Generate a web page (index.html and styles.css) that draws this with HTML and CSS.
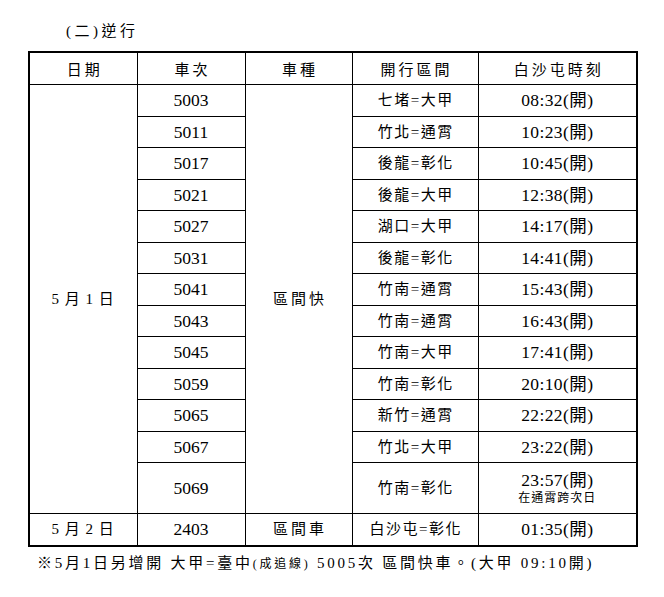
FILE: index.html
```html
<!DOCTYPE html>
<html lang="zh-Hant">
<head>
<meta charset="utf-8">
<link rel="stylesheet" href="styles.css">
</head>
<body>
<div class="page">
  <p class="title">(二)逆行</p>
  <table class="sched">
    <colgroup>
      <col class="c1"><col class="c2"><col class="c3"><col class="c4"><col class="c5">
    </colgroup>
    <thead>
      <tr><th>日期</th><th>車次</th><th>車種</th><th>開行區間</th><th>白沙屯時刻</th></tr>
    </thead>
    <tbody>
      <tr><td rowspan="13" class="date">5 月 1 日</td><td class="num">5003</td><td rowspan="13" class="kind">區間快</td><td class="sec">七堵=大甲</td><td class="time">08:32(開)</td></tr>
      <tr><td class="num">5011</td><td class="sec">竹北=通霄</td><td class="time">10:23(開)</td></tr>
      <tr><td class="num">5017</td><td class="sec">後龍=彰化</td><td class="time">10:45(開)</td></tr>
      <tr><td class="num">5021</td><td class="sec">後龍=大甲</td><td class="time">12:38(開)</td></tr>
      <tr><td class="num">5027</td><td class="sec">湖口=大甲</td><td class="time">14:17(開)</td></tr>
      <tr><td class="num">5031</td><td class="sec">後龍=彰化</td><td class="time">14:41(開)</td></tr>
      <tr><td class="num">5041</td><td class="sec">竹南=通霄</td><td class="time">15:43(開)</td></tr>
      <tr><td class="num">5043</td><td class="sec">竹南=通霄</td><td class="time">16:43(開)</td></tr>
      <tr><td class="num">5045</td><td class="sec">竹南=大甲</td><td class="time">17:41(開)</td></tr>
      <tr><td class="num">5059</td><td class="sec">竹南=彰化</td><td class="time">20:10(開)</td></tr>
      <tr><td class="num">5065</td><td class="sec">新竹=通霄</td><td class="time">22:22(開)</td></tr>
      <tr><td class="num">5067</td><td class="sec">竹北=大甲</td><td class="time">23:22(開)</td></tr>
      <tr class="tall"><td class="num">5069</td><td class="sec">竹南=彰化</td><td class="time">23:57(開)<span class="sub">在通霄跨次日</span></td></tr>
      <tr><td class="date">5 月 2 日</td><td class="num">2403</td><td class="kind">區間車</td><td class="sec">白沙屯=彰化</td><td class="time">01:35(開)</td></tr>
    </tbody>
  </table>
  <p class="note">※5月1日另增開 大甲=臺中<span class="small">(成追線)</span> 5005次 區間快車。(大甲 09:10開)</p>
</div>
</body>
</html>
```
FILE: styles.css
```css
html, body {
  margin: 0;
  padding: 0;
  background: #ffffff;
}
body {
  font-family: "Liberation Serif", "Noto Sans CJK TC", serif;
  color: #000000;
}
.page {
  padding: 21px 0 0 28px;
  width: 608px;
}
.title {
  margin: 0 0 10px 38px;
  font-size: 15px;
  line-height: 20px;
  letter-spacing: 3.5px;
}
.sched {
  border-collapse: collapse;
  border: 2px solid #000;
  width: 608px;
  table-layout: fixed;
}
.c1 { width: 108px; }
.c2 { width: 108px; }
.c3 { width: 107px; }
.c4 { width: 126px; }
.c5 { width: 159px; }
.sched th,
.sched td {
  border: 1px solid #000;
  text-align: center;
  vertical-align: middle;
  padding: 0;
  font-weight: normal;
}
.sched th {
  height: 31px;
  font-size: 15px;
  letter-spacing: 3px;
  padding-left: 3px;
  border-bottom-width: 1.5px;
}
.sched td {
  height: 30.5px;
  font-size: 15px;
  line-height: 18px;
}
.sched .num {
  font-size: 17.5px;
}
.sched .time {
  font-size: 17.5px;
  letter-spacing: 0.4px;
}
.sched .sec {
  letter-spacing: 1.5px;
  padding-left: 1.5px;
}
.sched .kind {
  letter-spacing: 3px;
  padding-left: 3px;
}
.sched .date {
  letter-spacing: 1px;
}
.sched .tall td {
  height: 50px;
}
.sub {
  display: block;
  font-size: 12px;
  line-height: 16px;
  letter-spacing: 1px;
  margin-top: 1px;
}
.note {
  margin: 6px 0 0 9px;
  font-size: 15px;
  line-height: 20px;
  letter-spacing: 2.75px;
  white-space: nowrap;
}
.small {
  font-size: 12px;
}
```
